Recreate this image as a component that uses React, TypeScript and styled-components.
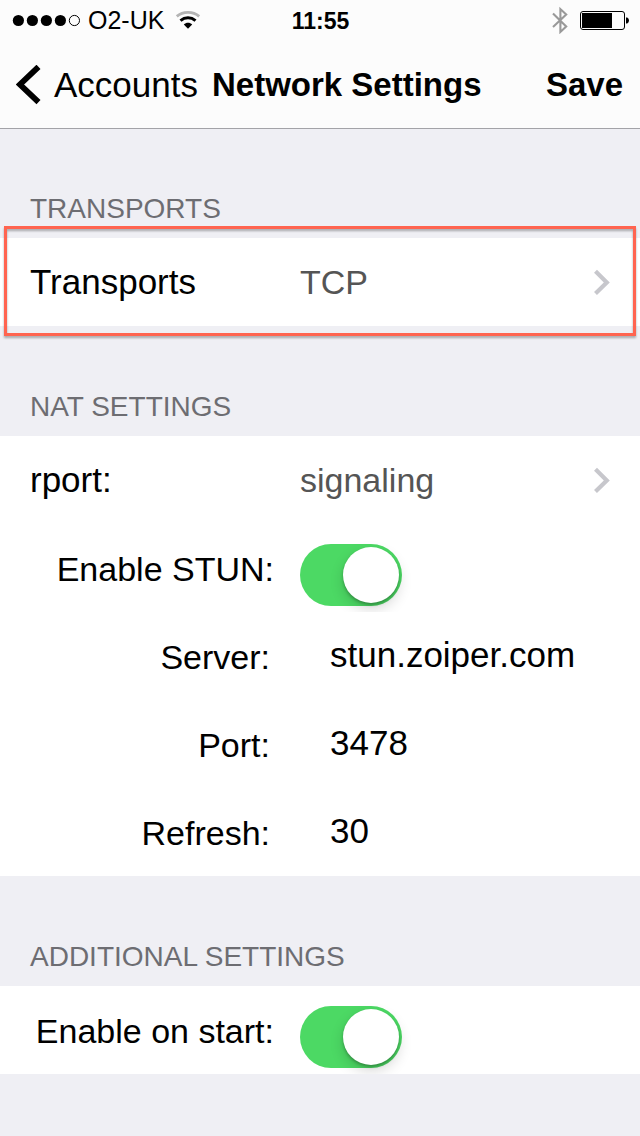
import React, { useState } from "react";
import styled, { createGlobalStyle } from "styled-components";

const GlobalStyle = createGlobalStyle`
  *, *::before, *::after { box-sizing: border-box; }
  body {
    margin: 0;
    background: #efeff4;
    color: #000;
    font-family: "Liberation Sans", Arial, sans-serif;
  }
  button, input {
    margin: 0;
    padding: 0;
    border: 0;
    background: none;
    color: inherit;
    font: inherit;
  }
`;

const Header = styled.header`
  position: relative;
  background: #fcfcfc;
  box-shadow: 0 1px 0 #a3a3a8;
`;

const StatusBar = styled.div`
  display: grid;
  grid-template-columns: 1fr auto 1fr;
  align-items: center;
  height: 40px;
  padding: 0 11px 0 12px;
  font-size: 25px;
  line-height: 28px;
`;

const StatusGroup = styled.div<{ $end?: boolean }>`
  display: flex;
  align-items: center;
  justify-content: ${(p) => (p.$end ? "flex-end" : "flex-start")};
  gap: ${(p) => (p.$end ? 12 : 6)}px;

  svg {
    display: block;
  }
`;

const Carrier = styled.span`
  margin-right: 5px;
`;

const Clock = styled.time`
  padding-top: 2px;
  font-size: 23px;
  font-weight: 700;
`;

const NavBar = styled.nav`
  display: flex;
  align-items: center;
  gap: 14px;
  height: 88px;
  padding: 2px 17px 0 16px;
  line-height: 40px;
`;

const BackLink = styled.a`
  display: flex;
  align-items: center;
  gap: 12px;
  color: inherit;
  font-size: 35px;
  text-decoration: none;
`;

const Title = styled.h1`
  margin: 0;
  font-size: 33px;
  font-weight: 700;
  white-space: nowrap;
`;

const SaveButton = styled.button`
  margin-left: auto;
  font-size: 33px;
  font-weight: 700;
`;

const SectionTitle = styled.h2`
  display: flex;
  align-items: flex-end;
  height: 110px;
  margin: 0;
  padding: 0 30px 13px;
  color: #6d6d72;
  font-size: 28px;
  font-weight: 400;
  line-height: 32px;
  text-transform: uppercase;
`;

const Group = styled.div`
  position: relative;
  background: #fff;
`;

const Highlight = styled.div`
  position: absolute;
  inset: -12px 4px -10px;
  border: 3px solid #ff6450;
  filter: drop-shadow(0 2px 1px rgba(0, 0, 0, 0.3));
  pointer-events: none;
`;

const LinkRow = styled.button`
  display: grid;
  grid-template-columns: 270px 1fr auto;
  align-items: center;
  width: 100%;
  height: 88px;
  padding: 0 30px;
  font-size: 35px;
  line-height: 40px;
  text-align: left;
`;

const LinkValue = styled.span`
  color: #555;
  font-size: 34px;
`;

const FormRow = styled.div<{ $labelWidth: number; $gap: number }>`
  display: grid;
  grid-template-columns: ${(p) => p.$labelWidth}px 1fr;
  column-gap: ${(p) => p.$gap}px;
  align-items: center;
  height: 88px;
  padding-right: 30px;
  overflow: hidden;
  font-size: 34px;
  line-height: 40px;
`;

const Label = styled.label`
  padding-top: 1px;
  text-align: right;
  white-space: nowrap;
`;

const TextInput = styled.input`
  width: 100%;
  padding-bottom: 3px;
  font-size: 35px;
  outline: none;
`;

const Switch = styled.input`
  appearance: none;
  display: flex;
  align-self: end;
  width: 102px;
  height: 62px;
  margin-bottom: 6px;
  padding: 3px;
  border-radius: 31px;
  background: #e5e5ea;

  &::before {
    content: "";
    width: 56px;
    height: 56px;
    border-radius: 50%;
    background: #fff;
    box-shadow: 0 6px 14px rgba(0, 0, 0, 0.16), 0 2px 3px rgba(0, 0, 0, 0.25);
  }

  &:checked {
    justify-content: flex-end;
    background: #4cd964;
  }
`;

const SignalDots = () => (
  <svg width="70" height="14" viewBox="0 0 70 14" aria-hidden="true">
    {[6.4, 20.4, 34.4, 48.4].map((cx) => (
      <circle key={cx} cx={cx} cy="7.5" r="5.6" />
    ))}
    <circle cx="62.4" cy="7.5" r="5.1" fill="none" stroke="#000" />
  </svg>
);

const WifiIcon = () => (
  <svg width="26" height="20" viewBox="0 0 26 20" fill="none" aria-hidden="true">
    <path d="M1.8 6.4C8 .9 18 .9 24.2 6.4" stroke="#b4b4b4" strokeWidth="2.8" />
    <path d="M5.5 10.7C10 6.9 16 6.9 20.5 10.7" stroke="#000" strokeWidth="3" />
    <path d="M8.8 14.4C11.2 12.2 14.8 12.2 17.2 14.4L13 18.8Z" fill="#000" />
  </svg>
);

const BluetoothIcon = () => (
  <svg width="16" height="28" viewBox="0 0 16 28" fill="none" stroke="#999" strokeWidth="2.1" aria-hidden="true">
    <path d="M1 7.6L14.2 20.4L8.4 25.9V3.1L14.2 8.6L1 21" />
  </svg>
);

const BatteryIcon = () => (
  <svg width="49" height="20" viewBox="0 0 49 20" aria-hidden="true">
    <rect x=".5" y="1.5" width="44" height="18" rx="2.5" fill="none" stroke="#000" />
    <rect x="2" y="3" width="30" height="15" />
    <path d="M46 7.5H47.2Q49 8.5 49 10.5T47.2 13.5H46Z" />
  </svg>
);

const BackChevron = () => (
  <svg width="26" height="40" viewBox="0 0 26 40" fill="none" aria-hidden="true">
    <path d="M22.5 1.8L4 19.5L22.5 37.2" stroke="#000" strokeWidth="5.8" />
  </svg>
);

const RowChevron = () => (
  <svg width="16" height="26" viewBox="0 0 16 26" fill="none" aria-hidden="true">
    <path d="M1.5 2.3L12.8 13.4L1.5 24.5" stroke="#c7c7cc" strokeWidth="4.2" />
  </svg>
);

function NavigationRow({ label, value }: { label: string; value: string }) {
  return (
    <LinkRow type="button">
      <span>{label}</span>
      <LinkValue>{value}</LinkValue>
      <RowChevron />
    </LinkRow>
  );
}

function SwitchRow({ id, label }: { id: string; label: string }) {
  const [on, setOn] = useState(true);
  return (
    <FormRow $labelWidth={274} $gap={26}>
      <Label htmlFor={id}>{label}</Label>
      <Switch id={id} type="checkbox" role="switch" checked={on} onChange={(e) => setOn(e.target.checked)} />
    </FormRow>
  );
}

function FieldRow({ id, label, value }: { id: string; label: string; value: string }) {
  return (
    <FormRow $labelWidth={270} $gap={60}>
      <Label htmlFor={id}>{label}</Label>
      <TextInput id={id} type="text" defaultValue={value} />
    </FormRow>
  );
}

export default function App() {
  return (
    <>
      <GlobalStyle />
      <Header>
        <StatusBar>
          <StatusGroup>
            <SignalDots />
            <Carrier>O2-UK</Carrier>
            <WifiIcon />
          </StatusGroup>
          <Clock>11:55</Clock>
          <StatusGroup $end>
            <BluetoothIcon />
            <BatteryIcon />
          </StatusGroup>
        </StatusBar>
        <NavBar>
          <BackLink href="#accounts">
            <BackChevron />
            Accounts
          </BackLink>
          <Title>Network Settings</Title>
          <SaveButton type="button">Save</SaveButton>
        </NavBar>
      </Header>
      <main>
        <section>
          <SectionTitle>Transports</SectionTitle>
          <Group>
            <NavigationRow label="Transports" value="TCP" />
            <Highlight />
          </Group>
        </section>
        <section>
          <SectionTitle>NAT settings</SectionTitle>
          <Group>
            <NavigationRow label="rport:" value="signaling" />
            <SwitchRow id="enable-stun" label="Enable STUN:" />
            <FieldRow id="server" label="Server:" value="stun.zoiper.com" />
            <FieldRow id="port" label="Port:" value="3478" />
            <FieldRow id="refresh" label="Refresh:" value="30" />
          </Group>
        </section>
        <section>
          <SectionTitle>Additional settings</SectionTitle>
          <Group>
            <SwitchRow id="enable-on-start" label="Enable on start:" />
          </Group>
        </section>
      </main>
    </>
  );
}
